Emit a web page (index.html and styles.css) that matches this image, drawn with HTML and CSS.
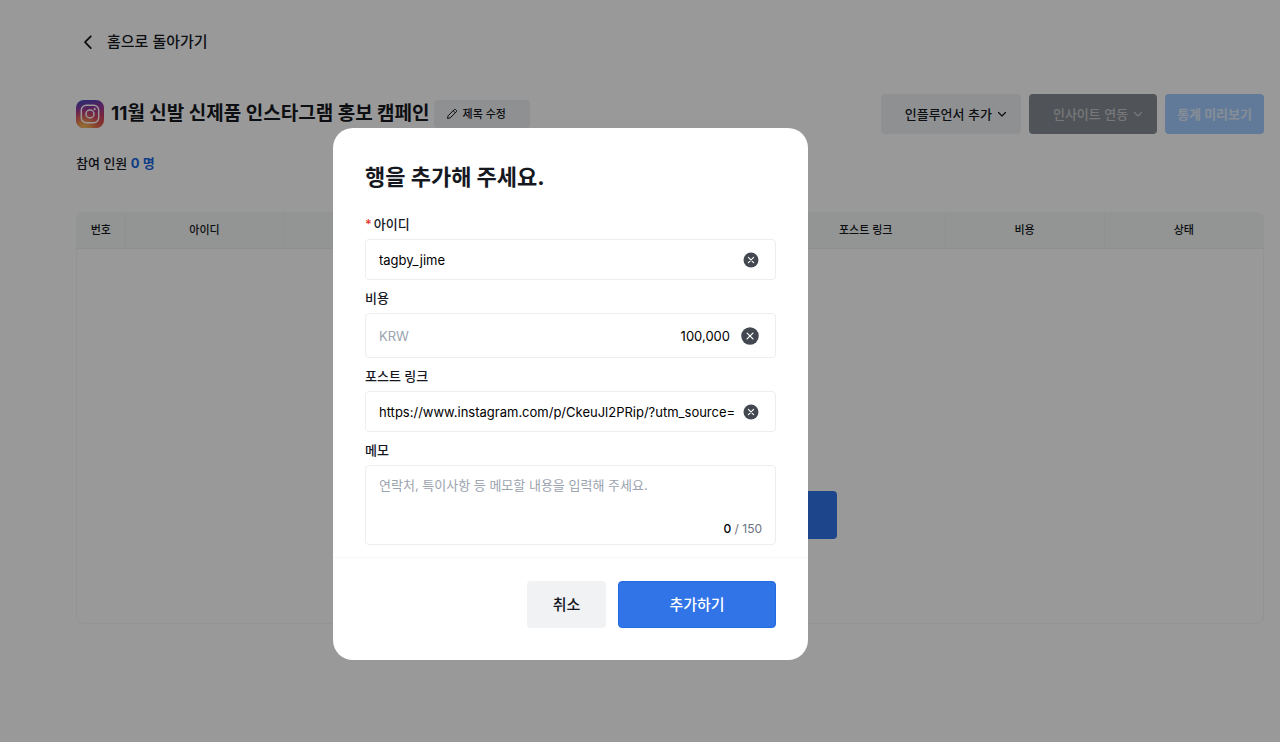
FILE: index.html
```
<!DOCTYPE html>
<html lang="ko">
<head>
    <meta charset="UTF-8">
    <meta name="viewport" content="width=device-width, initial-scale=1.0">
    <title>11월 신발 신제품 인스타그램 홍보 캠페인</title>
    <link rel="stylesheet" href="styles.css">
</head>
<body>
    <main class="page">
        <a href="#" class="back">
            <svg width="24" height="24" viewBox="0 0 24 24" fill="none" stroke="currentColor" stroke-width="1.8" stroke-linecap="round" stroke-linejoin="round"><path d="M14.8 6.3 9 12.2l5.8 5.9"/></svg>
            홈으로 돌아가기
        </a>
        <header class="campaign">
            <svg class="insta" width="28" height="28" viewBox="0 0 28 28">
                <defs>
                    <linearGradient id="instaBase" x1="0.35" y1="0" x2="0.55" y2="1">
                        <stop offset="0" stop-color="#4a48b8"/>
                        <stop offset="0.3" stop-color="#93389f"/>
                        <stop offset="0.65" stop-color="#c93a68"/>
                        <stop offset="1" stop-color="#e0603c"/>
                    </linearGradient>
                    <radialGradient id="instaGlow" cx="0.28" cy="1.05" r="0.8">
                        <stop offset="0" stop-color="#f5c862"/>
                        <stop offset="0.35" stop-color="#ee9550"/>
                        <stop offset="1" stop-color="#e04060" stop-opacity="0"/>
                    </radialGradient>
                </defs>
                <rect width="28" height="28" rx="8" fill="url(#instaBase)"/>
                <rect width="28" height="28" rx="8" fill="url(#instaGlow)"/>
                <rect x="5.3" y="5.3" width="17.4" height="17.4" rx="5" fill="none" stroke="#fff" stroke-width="1.5"/>
                <circle cx="14" cy="14" r="4" fill="none" stroke="#fff" stroke-width="1.5"/>
                <circle cx="18.7" cy="9.2" r="1.1" fill="#fff"/>
            </svg>
            <h1>11월 신발 신제품 인스타그램 홍보 캠페인</h1>
            <button type="button" class="btn btnEdit">
                <svg width="12" height="12" viewBox="0 0 12 12" fill="none" stroke="currentColor" stroke-linejoin="round"><path d="M1.5 10.5l.6-2.7L8.3 1.6a1 1 0 0 1 1.4 0l.7.7a1 1 0 0 1 0 1.4L4.2 9.9z M7.2 2.7l2.1 2.1"/></svg>
                제목 수정
            </button>
            <div class="actions">
                <button type="button" class="btn btnAdd">인플루언서 추가
                    <svg width="10" height="10" viewBox="0 0 10 10" fill="none" stroke="currentColor" stroke-width="1.2" stroke-linecap="round" stroke-linejoin="round"><path d="M1.5 3.5 5 7l3.5-3.5"/></svg>
                </button>
                <button type="button" class="btn btnInsight">인사이트 연동
                    <svg width="10" height="10" viewBox="0 0 10 10" fill="none" stroke="currentColor" stroke-width="1.2" stroke-linecap="round" stroke-linejoin="round"><path d="M1.5 3.5 5 7l3.5-3.5"/></svg>
                </button>
                <button type="button" class="btn btnStats">통계 미리보기</button>
            </div>
        </header>
        <p class="count">참여 인원 <strong>0 명</strong></p>
        <section class="list">
            <table>
                <thead>
                    <tr>
                        <th class="colNo">번호</th>
                        <th class="colWide">아이디</th>
                        <th></th>
                        <th></th>
                        <th></th>
                        <th class="colWide">포스트 링크</th>
                        <th class="colWide">비용</th>
                        <th class="colWide">상태</th>
                    </tr>
                </thead>
            </table>
            <div class="empty">
                <button type="button" class="btn btnEmpty"></button>
            </div>
        </section>
    </main>

    <div class="overlay">
        <form class="modal" role="dialog" aria-labelledby="modalTitle">
            <div class="modalBody">
                <h2 id="modalTitle">행을 추가해 주세요.</h2>

                <label for="userId"><span class="required">*</span>아이디</label>
                <div class="field">
                    <input type="text" id="userId" value="tagby_jime">
                    <button type="button" class="clear">
                        <svg width="16" height="16" viewBox="0 0 16 16"><circle cx="8" cy="8" r="7.5" fill="#434850"/><path d="M5.4 5.4l5.2 5.2M10.6 5.4l-5.2 5.2" stroke="#fff" stroke-width="1.1" stroke-linecap="round"/></svg>
                    </button>
                </div>

                <label for="cost">비용</label>
                <div class="field fieldCost">
                    <span class="unit">KRW</span>
                    <input type="text" id="cost" value="100,000">
                    <button type="button" class="clear">
                        <svg width="18" height="18" viewBox="0 0 16 16"><circle cx="8" cy="8" r="7.8" fill="#434850"/><path d="M5.4 5.4l5.2 5.2M10.6 5.4l-5.2 5.2" stroke="#fff" stroke-width="1.1" stroke-linecap="round"/></svg>
                    </button>
                </div>

                <label for="postLink">포스트 링크</label>
                <div class="field">
                    <input type="text" id="postLink" value="https://www.instagram.com/p/CkeuJl2PRip/?utm_source=">
                    <button type="button" class="clear">
                        <svg width="16" height="16" viewBox="0 0 16 16"><circle cx="8" cy="8" r="7.5" fill="#434850"/><path d="M5.4 5.4l5.2 5.2M10.6 5.4l-5.2 5.2" stroke="#fff" stroke-width="1.1" stroke-linecap="round"/></svg>
                    </button>
                </div>

                <label for="memo">메모</label>
                <div class="memo">
                    <textarea id="memo" maxlength="150" placeholder="연락처, 특이사항 등 메모할 내용을 입력해 주세요."></textarea>
                    <p class="memoCount"><span>0</span> / 150</p>
                </div>
            </div>
            <div class="modalFooter">
                <button type="button" class="btn btnCancel">취소</button>
                <button type="submit" class="btn btnSubmit">추가하기</button>
            </div>
        </form>
    </div>
</body>
</html>
```
FILE: styles.css
```
*{
    box-sizing: border-box;
    margin: 0;
    padding: 0;
}
body{
    font-family: Inter, 'Noto Sans CJK KR', sans-serif;
    font-size: 13px;
    font-weight: 500;
    line-height: 20px;
    color: #16181f;
    background: #fff;
}
button, input, textarea{
    font: inherit;
    color: inherit;
}
svg{
    flex: none;
}

/* page */
.page{
    padding: 30px 16px 0 76px;
}
.back{
    display: inline-flex;
    align-items: center;
    gap: 7px;
    height: 24px;
    color: #16181f;
    font-size: 15px;
    text-decoration: none;
}
.campaign{
    display: flex;
    align-items: center;
    margin-top: 35px;
}
.campaign h1{
    margin: 0 4px 0 7px;
    font-size: 19px;
    line-height: 28px;
    font-weight: 700;
    white-space: nowrap;
}
.btn{
    display: inline-flex;
    align-items: center;
    justify-content: center;
    gap: 5px;
    border: none;
    border-radius: 4px;
    white-space: nowrap;
    cursor: pointer;
}
.btnEdit{
    height: 28px;
    padding: 0 24px 0 12px;
    background: #eff1f4;
    font-size: 11px;
}
.actions{
    display: flex;
    gap: 8px;
    margin-left: auto;
}
.actions .btn{
    height: 40px;
}
.actions .btnAdd{
    padding: 0 14px 0 24px;
    background: #eff1f4;
}
.actions .btnInsight{
    padding: 0 14px 0 24px;
    background: #868b92;
    color: #c6c9cd;
}
.actions .btnStats{
    padding: 0 12px;
    background: #a2cbff;
    color: #dfebfa;
    font-weight: 700;
}
.count{
    margin-top: 19px;
}
.count strong{
    color: #1967df;
    font-weight: 700;
}
.list{
    margin-top: 39px;
    border: 1px solid #f4f5f6;
    border-radius: 8px;
    overflow: hidden;
}
table{
    width: 100%;
    table-layout: fixed;
    border-collapse: collapse;
}
th{
    height: 35px;
    background: #f4f8f6;
    border-right: 1px solid #eef2f1;
    border-bottom: 1px solid #eef2f1;
    font-size: 11px;
    font-weight: 500;
}
th:last-child{
    border-right: none;
}
.colNo{
    width: 48px;
}
.colWide{
    width: 13.4%;
}
.empty{
    display: flex;
    justify-content: center;
    padding: 242px 0 84px;
}
.btnEmpty{
    width: 334px;
    height: 48px;
    background: #3174e8;
}

/* modal */
.overlay{
    position: fixed;
    inset: 0;
    display: flex;
    align-items: center;
    justify-content: center;
    padding: 46px 139px 0 0;
    background: rgba(0, 0, 0, 0.4);
}
.modal{
    width: 475px;
    max-width: 100%;
    background: #fff;
    border-radius: 20px;
}
.modalBody{
    display: flex;
    flex-direction: column;
    padding: 32px 32px 12px;
}
.modal h2{
    margin-bottom: 12px;
    font-size: 22px;
    line-height: 34px;
    font-weight: 700;
}
.modal label{
    margin: 8px 0 5px;
}
.required{
    margin-right: 2px;
    color: #e5352d;
}
.field{
    display: flex;
    align-items: center;
    height: 41px;
    padding: 0 16px 0 13px;
    border: 1px solid #eceef0;
    border-radius: 4px;
    font-weight: 400;
    color: #000;
}
.fieldCost{
    height: 45px;
}
.field input{
    flex: 1;
    min-width: 0;
    border: none;
    outline: none;
    background: none;
}
.fieldCost input{
    text-align: right;
}
.unit{
    color: #9ba3af;
}
.clear{
    display: flex;
    margin-left: 8px;
    border: none;
    background: none;
    cursor: pointer;
}
.fieldCost .clear{
    margin-left: 11px;
}
.memo{
    display: flex;
    flex-direction: column;
    height: 80px;
    padding: 9px 13px 5px;
    border: 1px solid #eceef0;
    border-radius: 4px;
    font-weight: 400;
}
.memo textarea{
    flex: 1;
    width: 100%;
    border: none;
    outline: none;
    resize: none;
    background: none;
}
.memo textarea::placeholder{
    color: #9ba3af;
}
.memoCount{
    font-size: 12px;
    text-align: right;
    color: #6b7280;
}
.memoCount span{
    color: #000;
    font-weight: 500;
}
.modalFooter{
    display: flex;
    justify-content: flex-end;
    gap: 12px;
    padding: 23px 32px 32px;
    border-top: 1px solid #f6f7f8;
}
.modalFooter .btn{
    height: 47px;
    font-size: 15px;
}
.modalFooter .btnCancel{
    width: 79px;
    background: #f0f2f4;
}
.modalFooter .btnSubmit{
    width: 158px;
    background: #3174e8;
    border: 1px solid #226ae2;
    color: #fff;
}
```
